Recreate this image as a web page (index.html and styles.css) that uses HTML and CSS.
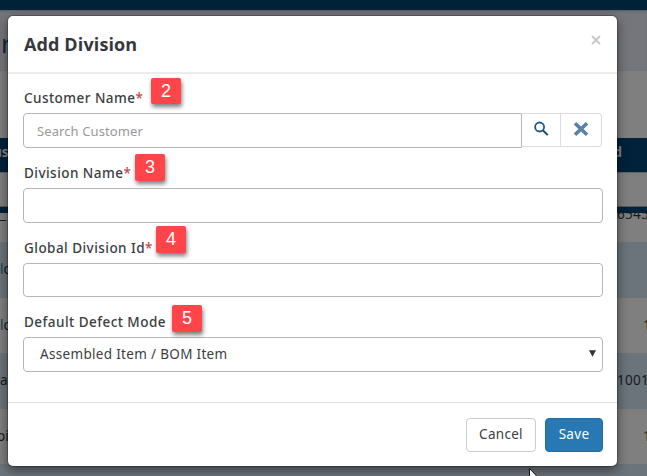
FILE: index.html
```html
<!DOCTYPE html>
<html lang="en">
<head>
<meta charset="utf-8">
<title>Add Division</title>
<link rel="stylesheet" href="styles.css">
</head>
<body>
<div class="page">
  <div class="topbar"></div>
  <div class="page-title"><span>r</span></div>
  <div class="toolbar"></div>
  <div class="table-head"><span>us</span><span class="head-end">d</span></div>
  <div class="filters"></div>
  <div class="rule"></div>
  <div class="row first"><span>_</span><span class="end">6545</span></div>
  <div class="row alt"><span><i>l</i>o</span></div>
  <div class="row"><span><i>l</i>o</span><span class="end one">1</span></div>
  <div class="row alt"><span>a</span><span class="end">1001</span></div>
  <div class="row"><span class="tight">oi</span><span class="end one">1</span></div>
  <div class="row alt"></div>
</div>

<form class="modal">
  <header class="modal-header">
    <h1>Add Division</h1>
    <button type="button" class="close" aria-label="Close">
      <svg width="10" height="10" viewBox="0 0 10 10"><path d="M1 1l8 8M9 1l-8 8" fill="none" stroke="#c8c8c8" stroke-width="1.8"/></svg>
    </button>
  </header>
  <div class="modal-body">
    <div class="group">
      <label for="customer"><span>Customer Name</span><em>*</em><b class="badge b2">2</b></label>
      <div class="search">
        <input id="customer" type="text" placeholder="Search Customer">
        <button type="button" class="find" aria-label="Search">
          <svg width="16" height="16" viewBox="0 0 16 16"><circle cx="6.6" cy="6" r="4.5" fill="none" stroke="#22598c" stroke-width="1.8"/><path d="M9.8 9.3l5 4.8" fill="none" stroke="#174b78" stroke-width="2"/></svg>
        </button>
        <button type="button" class="clear" aria-label="Clear">
          <svg width="16" height="16" viewBox="0 0 16 16"><path d="M2 2.2l12 11.6M14 2.2L2 13.8" fill="none" stroke="#5681a8" stroke-width="3.6"/></svg>
        </button>
      </div>
    </div>
    <div class="group">
      <label for="division"><span>Division Name</span><em>*</em><b class="badge b3">3</b></label>
      <input id="division" type="text">
    </div>
    <div class="group">
      <label for="global"><span>Global Division Id</span><em>*</em><b class="badge b4">4</b></label>
      <input id="global" class="short" type="text">
    </div>
    <div class="group">
      <label><span>Default Defect Mode</span><b class="badge b5">5</b></label>
      <div class="select"><span>Assembled Item / BOM Item</span>
        <svg width="7" height="7" viewBox="0 0 7 7"><path d="M0 .3h7L3.5 6.8z" fill="#303438"/></svg>
      </div>
    </div>
  </div>
  <footer class="modal-footer">
    <button type="button" class="cancel">Cancel</button>
    <button type="button" class="save">Save</button>
  </footer>
</form>
<svg class="cursor" width="12" height="19" viewBox="0 0 12 19"><path d="M.5 .5v15l3.5-3.3 2.5 5.5 2-1-2.4-5.2h4.9z" fill="#fff" stroke="#111"/></svg>
</body>
</html>
```

FILE: styles.css
```css
* { box-sizing: border-box; }

body {
  margin: 0;
  width: 647px;
  height: 476px;
  overflow: hidden;
  font-family: "Noto Sans", "Open Sans", sans-serif;
  font-size: 13.5px;
  color: #3a3e42;
}

input, button { font: inherit; color: inherit; }

.page {
  height: 476px;
  overflow: hidden;
  background: #7f7f7f;
  color: #17191b;
}

.topbar { height: 10px; background: #002239; }

.page-title {
  height: 61px;
  background: #75767b;
  border-bottom: 1px solid #737479;
  color: #112a3e;
  font-size: 26px;
  line-height: 66px;
  box-shadow: inset 0 3px 3px -2px #55585e;
}
.page-title span { margin-left: 1px; }

.toolbar { height: 67px; }

.table-head {
  display: flex;
  justify-content: space-between;
  height: 34px;
  background: #00223b;
  color: #808488;
  font-weight: 700;
  line-height: 29px;
}
.table-head span { margin-left: -7px; }
.table-head .head-end { margin-right: 25px; }

.filters { height: 35px; border-top: 1px solid #606468; border-bottom: 1px solid #55595d; }
.rule { height: 6px; background: #00223b; }

.row {
  display: flex;
  justify-content: space-between;
  height: 55.5px;
  line-height: 55px;
  overflow: hidden;
}
.row i { font-style: normal; color: #123e52; }
.row .tight { margin-left: -3px; }
.row.first { height: 29px; line-height: 3px; }
.row.alt { background: #6b747b; }
.row .end { margin-right: -2px; letter-spacing: .3px; }
.row .one { margin-right: -4px; color: #3b2d22; }

.modal {
  position: absolute;
  left: 8px;
  top: 16px;
  width: 609px;
  height: 450px;
  background: #fff;
  border-radius: 5px;
  box-shadow: 0 0 0 1px rgba(0, 0, 0, .22), 0 4px 12px rgba(0, 0, 0, .5);
}

.modal-header {
  display: flex;
  justify-content: space-between;
  height: 58px;
  padding: 0 16px;
  border-bottom: 2px solid #ececec;
}
.modal-header h1 {
  margin: 0;
  font-family: "Open Sans", sans-serif;
  font-size: 18px;
  font-weight: 700;
  letter-spacing: .12px;
  line-height: 56px;
  color: #35393d;
}
.close {
  align-self: flex-start;
  display: flex;
  margin-top: 19px;
  padding: 0;
  border: 0;
  background: none;
}

.modal-body { height: 328px; padding: 12px 15px 0; }

.group { height: 75px; }
.group:nth-child(3) { height: 74px; }

label {
  display: flex;
  height: 27px;
  padding-left: 1px;
  line-height: 24px;
  font-weight: 500;
  letter-spacing: .46px;
}
label em { font-style: normal; color: #c8474b; }

.badge {
  display: block;
  position: absolute;
  width: 30px;
  height: 27px;
  border-radius: 2px;
  background: #ff4549;
  box-shadow: 1px 3px 4px rgba(0, 0, 0, .5);
  color: #fff;
  font: 400 18px/26px "Liberation Sans", Arial, sans-serif;
  letter-spacing: 0;
  text-align: center;
}
.b2 { left: 143px; top: 62px; height: 26px; }
.b3 { left: 127px; top: 138px; }
.b4 { left: 148px; top: 210px; }
.b5 { left: 164px; top: 289px; }

input, .select {
  width: 580px;
  height: 35px;
  padding: 0 13px;
  border: 1px solid #b4b8bb;
  border-radius: 4px;
  background: #fff;
}
input.short { height: 34px; }
input::placeholder { color: #999; opacity: 1; font-size: 13px; letter-spacing: .1px; }

.search { display: flex; width: 579px; }
.search input { width: 499px; border-radius: 4px 0 0 4px; }
.search button {
  display: flex;
  align-items: center;
  justify-content: center;
  height: 34px;
  padding: 0 0 3px;
  border: 1px solid #dcdcdc;
  background: #fff;
}
.search .find { width: 39px; border-left: 0; }
.search .clear { width: 41px; border-left: 0; border-radius: 0 4px 4px 0; }

.select {
  display: flex;
  align-items: center;
  justify-content: space-between;
  padding: 0 6px 2px 16px;
  letter-spacing: .32px;
}

.modal-footer {
  display: flex;
  justify-content: flex-end;
  gap: 9px;
  height: 64px;
  padding: 15px 14px 0 0;
  border-top: 1px solid #dfdfdf;
}
.modal-footer button {
  height: 34px;
  padding: 0 0 2px;
  border-radius: 4px;
  letter-spacing: .3px;
}
.cancel { width: 70px; border: 1px solid #ccc; background: #fff; }
.modal-footer .save { width: 58px; border: 1px solid #206ca5; background: #2879b3; color: #fff; }

.cursor { position: absolute; left: 529px; top: 468px; }
```
